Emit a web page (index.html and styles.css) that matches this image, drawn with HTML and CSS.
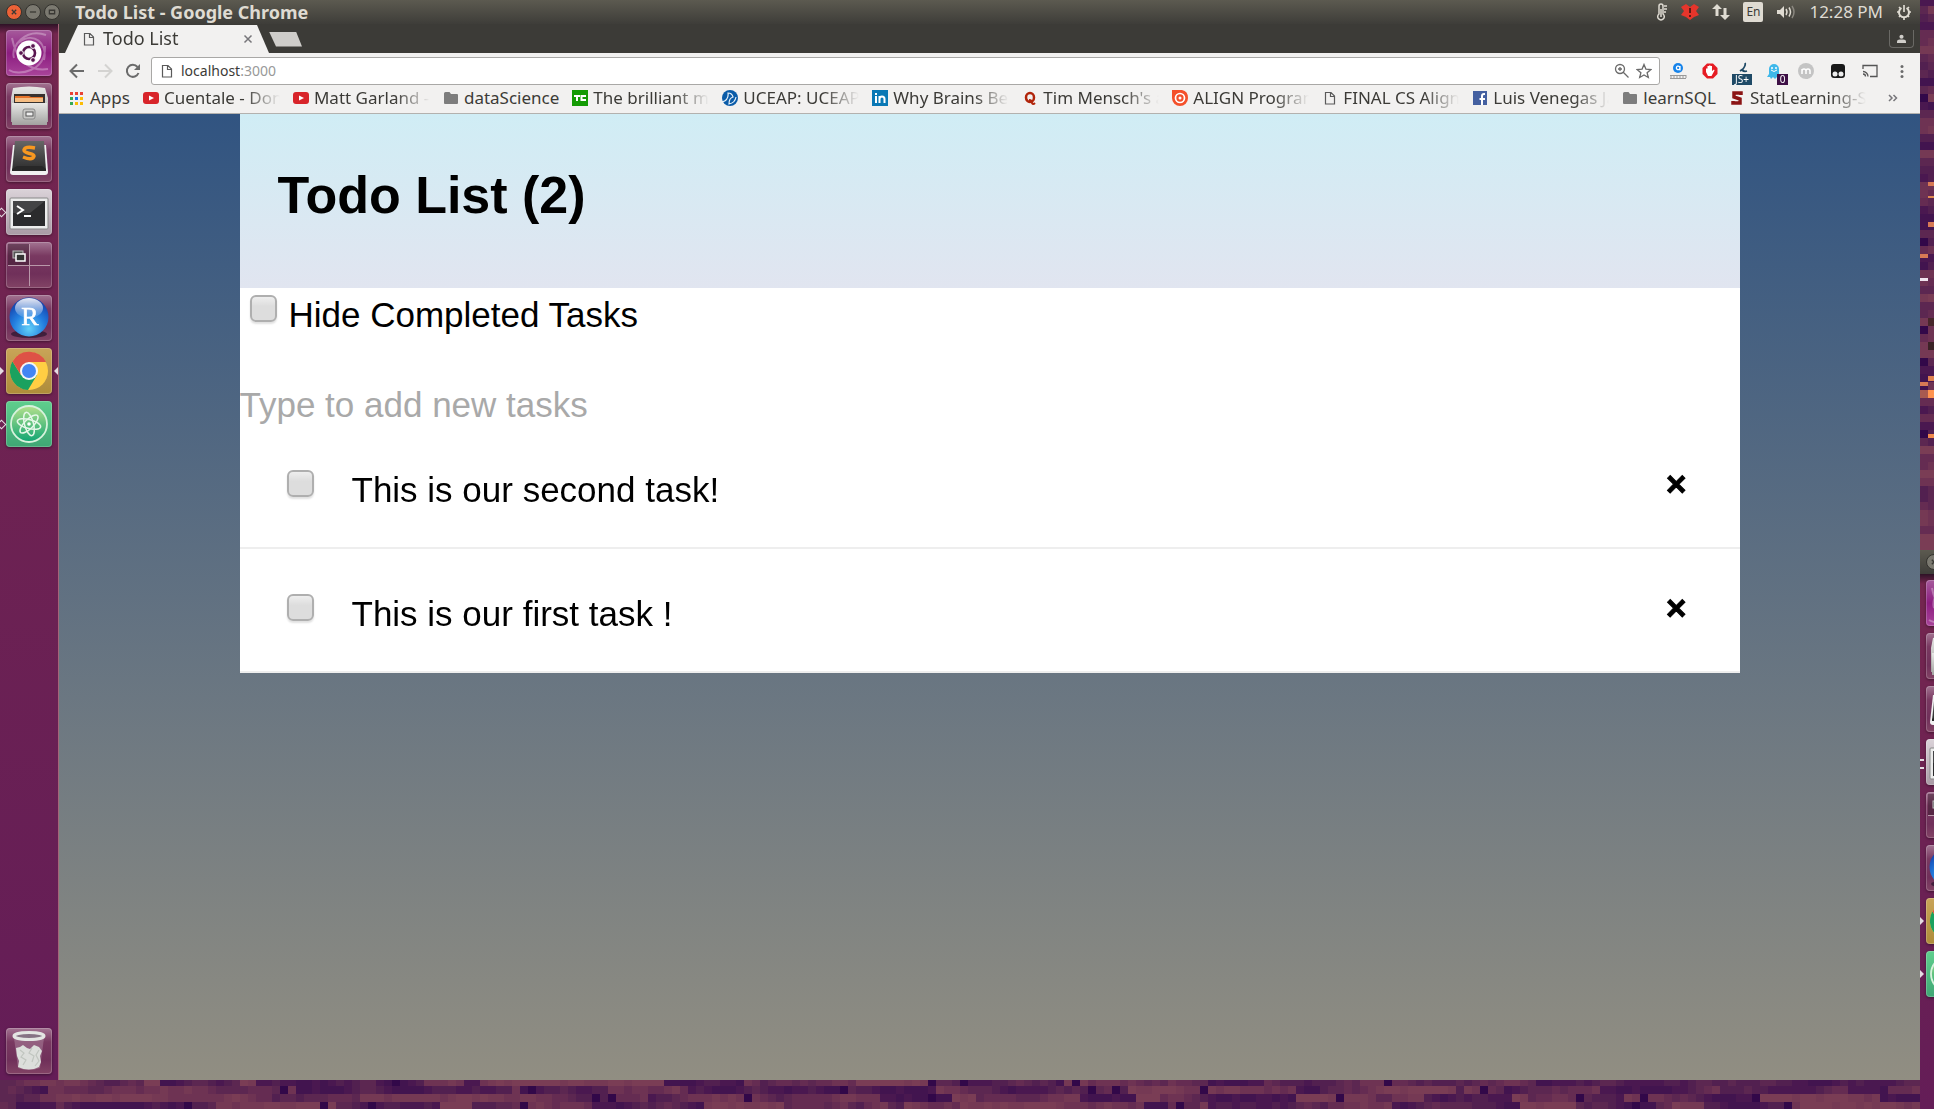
FILE: index.html
```html
<!DOCTYPE html>
<html lang="en">
<head>
<meta charset="utf-8">
<title>Todo List</title>
<link rel="stylesheet" href="styles.css">
</head>
<body>
<svg class="defs" aria-hidden="true">
  <defs>
    <linearGradient id="g-metal" x1="0" y1="0" x2="0" y2="1"><stop offset="0" stop-color="#e8e8e6"/><stop offset="1" stop-color="#a2a2a0"/></linearGradient>
    <linearGradient id="g-dark" x1="0" y1="0" x2="0" y2="1"><stop offset="0" stop-color="#666"/><stop offset="1" stop-color="#2b2b2b"/></linearGradient>
    <radialGradient id="g-blue" cx=".5" cy=".8" r=".8"><stop offset="0" stop-color="#62d0f8"/><stop offset=".5" stop-color="#237fe0"/><stop offset="1" stop-color="#1238a4"/></radialGradient>
    <linearGradient id="g-shine" x1="0" y1="0" x2="0" y2="1"><stop offset="0" stop-color="#fff" stop-opacity=".9"/><stop offset="1" stop-color="#fff" stop-opacity=".1"/></linearGradient>
    <linearGradient id="g-atom" x1="0" y1="0" x2="0" y2="1"><stop offset="0" stop-color="#b4e08c"/><stop offset="1" stop-color="#0fa573"/></linearGradient>
    <symbol id="i-ubuntu" viewBox="0 0 46 46">
      <g fill="none" stroke="#fff" stroke-opacity=".3" stroke-width="2"><path d="M3 40C12 46 40 42 39 16M40 5C20-2 4 16 8 28M6 8C10 30 24 42 42 39M12 13C28 0 42 14 38 30"/></g>
      <circle cx="23" cy="23" r="12.5" fill="#fff"/>
      <circle cx="23" cy="23" r="6" fill="none" stroke="#5a1650" stroke-width="2.6"/>
      <g fill="#5a1650" stroke="#fff"><circle cx="15" cy="23" r="2.4"/><circle cx="27" cy="16" r="2.4"/><circle cx="27" cy="30" r="2.4"/></g>
    </symbol>
    <symbol id="i-files" viewBox="0 0 46 46">
      <path d="M7 5q16-3 32 0l3 10v24H5V15z" fill="url(#g-metal)"/><path d="M8 11h31v9H8z" fill="#38322f"/>
      <path d="M9 13h14l2 1h12v4H9z" fill="#e6742a"/><path d="M9 15h28v4H9z" fill="#f5bd83"/>
      <path d="M6 20h35v22H6z" fill="url(#g-metal)"/><rect x="17" y="26" width="12" height="10" rx="2" fill="#c8c8c6" stroke="#888"/><rect x="20" y="29" width="7" height="4" fill="#eee" stroke="#555"/>
    </symbol>
    <symbol id="i-sublime" viewBox="0 0 46 46">
      <path d="M7 9L4 36q0 3 3 3h32q3 0 3-3L40 9z" fill="#f1f1f1"/><path d="M9 5h29l2 30H6z" fill="url(#g-dark)"/><path d="M6 35h34v-2l-4-3H11l-5 3z" fill="#272727"/>
      <path d="M29 12q-10-2-11 2c0 4 10 3 10 6-1 4-6 3-11 1" fill="none" stroke="#f89820" stroke-width="3.5"/>
    </symbol>
    <symbol id="i-terminal" viewBox="0 0 46 46">
      <rect x="4" y="9" width="38" height="31" rx="1" fill="#ececec" stroke="#888"/><rect x="7" y="12" width="32" height="25" fill="#2b2b2d"/><path d="M7 12h32L24 24H7z" fill="#fff" opacity=".12"/>
      <path d="M11 17l6 4-6 4M18 27h7" fill="none" stroke="#fff" stroke-width="2"/>
    </symbol>
    <symbol id="i-spaces" viewBox="0 0 46 46">
      <path d="M2 2h21v21H2z" fill="#301525" opacity=".45"/><path d="M23.500 2v42M2 23.500h42" stroke="#b998aa" fill="none"/>
      <rect x="7" y="9" width="10" height="7" fill="#555" stroke="#bbb"/><rect x="10" y="12" width="9" height="7" fill="#333" stroke="#fff" stroke-width="1.500"/>
    </symbol>
    <symbol id="i-r" viewBox="0 0 46 46">
      <ellipse cx="23" cy="39" rx="18" ry="4" fill="#1d0e25" opacity=".6"/><circle cx="23" cy="22" r="19.500" fill="url(#g-blue)"/><ellipse cx="23" cy="13" rx="14" ry="10" fill="url(#g-shine)"/>
      <text x="24" y="30" text-anchor="middle" font-family="Liberation Serif, serif" font-size="26" fill="#fff" stroke="#fff" stroke-width=".6">R</text>
    </symbol>
    <symbol id="i-chrome" viewBox="0 0 46 46">
      <circle cx="23" cy="23" r="19" fill="#ffce43"/><path d="M6.500 13.500A19 19 0 0 0 22 42l9-15-16 0z" fill="#1aa15f"/><path d="M6.500 13.500A19 19 0 0 1 40 14H23l-8 13z" fill="#de5246"/>
      <circle cx="23" cy="23" r="9" fill="#f5f5f5"/><circle cx="23" cy="23" r="7" fill="#4285f4"/>
    </symbol>
    <symbol id="i-atom" viewBox="0 0 46 46">
      <circle cx="23" cy="23" r="18" fill="url(#g-atom)" stroke="#d7f2dc" stroke-width="1.800"/>
      <g fill="none" stroke="#e5f7e9" stroke-width="1.500"><ellipse cx="23" cy="23" rx="12" ry="4.500" transform="rotate(15 23 23)"/><ellipse cx="23" cy="23" rx="12" ry="4.500" transform="rotate(75 23 23)"/><ellipse cx="23" cy="23" rx="12" ry="4.500" transform="rotate(135 23 23)"/></g><circle cx="23" cy="23" r="1.800" fill="#fff"/>
    </symbol>
    <symbol id="i-trash" viewBox="0 0 46 46">
      <path d="M8 10l4 30q11 4 22 0l4-30z" fill="#fff" opacity=".2"/>
      <path d="M10 20l4-1 3-2 4 3 3 1 4-4 5 2 3 4-2 5 1 6-2 5q-10 5-21 0l1-6-2-5z" fill="#dcdedb"/><path d="M14 22l4 3-3 4 5 3-3 5M26 20l-3 5 5 3-2 6M33 22l-3 5 3 6-4 5" fill="none" stroke="#c0c5bf" stroke-width="1.200"/>
      <ellipse cx="23" cy="8" rx="15" ry="3.500" fill="#867384" stroke="#e4e6e3" stroke-width="3"/>
    </symbol>
    <symbol id="i-page" viewBox="0 0 16 16"><path d="M3.500 2.500h5.500l3.500 3.500v8h-9zM8.500 2.500v4h4" fill="none" stroke="#5a5a5a" stroke-width="1.200"/></symbol>
    <symbol id="i-folder" viewBox="0 0 16 16"><path d="M1 3.500q0-1.500 1.500-1.500h4l1.500 2h6q1 0 1 1v8q0 1-1 1H2q-1 0-1-1z" fill="#7d7d7d"/></symbol>
    <symbol id="i-youtube" viewBox="0 0 16 16"><rect y="2" width="16" height="12" rx="3" fill="#d8242a"/><path d="M6 5.500v5L11 8z" fill="#fff"/></symbol>
  </defs>
</svg>

<canvas class="wallpaper" id="wallpaper" aria-hidden="true"></canvas>

<div class="screens">
  <div class="desktop">
    <header class="titlebar">
      <div class="window-buttons">
        <button class="wb wb-close" aria-label="Close"><svg viewBox="0 0 16 16"><path d="M5.500 5.500l5 5M10.500 5.500l-5 5"/></svg></button>
        <button class="wb" aria-label="Minimize"><svg viewBox="0 0 16 16"><path d="M4.500 8h7"/></svg></button>
        <button class="wb" aria-label="Maximize"><svg viewBox="0 0 16 16"><path d="M5 6h6v4H5z"/></svg></button>
      </div>
      <span class="window-title">Todo List - Google Chrome</span>
      <div class="tray">
        <svg width="12" height="18" viewBox="0 0 12 18"><path d="M3 11V3a2 2 0 0 1 4 0v8a3.300 3.300 0 1 1-4 0z" fill="none" stroke="#dfdbd2" stroke-width="1.500"/><path d="M5 6v8M8 3h3M8 6h3M8 9h2" stroke="#dfdbd2" stroke-width="1.500"/></svg>
        <svg width="18" height="18" viewBox="0 0 18 18"><path d="M5 1l4 3 4-3 5 3-3 4 3 4-5 2-4 3-4-3-5-2 3-4-3-4z" fill="#e6352b"/><path d="M9 5v5M9 12v2" stroke="#5e1a16" stroke-width="2"/></svg>
        <svg width="18" height="16" viewBox="0 0 18 16"><path d="M5 0l5 5H6.500v7h-3V5H0zM13 16l-5-5h3.500V4h3v7H18z" fill="#dfdbd2"/></svg>
        <span class="lang">En</span>
        <svg width="20" height="16" viewBox="0 0 20 16"><path d="M1 6h3l4-4v12l-4-4H1z" fill="#dfdbd2"/><path d="M10 5q2 3 0 6M13 3.500q3 4.500 0 9" fill="none" stroke="#dfdbd2" stroke-width="1.500"/><path d="M16 2q4 6 0 12" fill="none" stroke="#8a877f" stroke-width="1.500"/></svg>
        <span class="clock">12:28 PM</span>
        <svg width="16" height="16" viewBox="0 0 16 16"><path d="M5.500 4a5 5 0 1 0 5 0" fill="none" stroke="#dfdbd2" stroke-width="2"/><path d="M8 1v7M1 8h2M13 8h2M3 13l1.500-1.500M13 13l-1.500-1.500M8 13v3M3 3l1.500 1.500M13 3l-1.500 1.500" stroke="#dfdbd2" stroke-width="1.700"/></svg>
      </div>
    </header>

    <div class="workspace">
      <nav class="launcher" aria-label="Launcher">
        <button class="tile tile-ubuntu" aria-label="Dash"><svg><use href="#i-ubuntu"/></svg></button>
        <button class="tile" aria-label="Files"><svg><use href="#i-files"/></svg></button>
        <button class="tile" aria-label="Sublime Text"><svg><use href="#i-sublime"/></svg></button>
        <button class="tile tile-light running-off" aria-label="Terminal"><svg><use href="#i-terminal"/></svg></button>
        <button class="tile" aria-label="Workspaces"><svg><use href="#i-spaces"/></svg></button>
        <button class="tile" aria-label="RStudio"><svg><use href="#i-r"/></svg></button>
        <button class="tile tile-gold running focused" aria-label="Chrome"><svg><use href="#i-chrome"/></svg></button>
        <button class="tile tile-green running-off" aria-label="Atom"><svg><use href="#i-atom"/></svg></button>
        <button class="tile tile-trash" aria-label="Trash"><svg><use href="#i-trash"/></svg></button>
      </nav>

      <div class="browser">
        <div class="tabstrip">
          <div class="tab">
            <svg class="ico"><use href="#i-page"/></svg>
            <span class="tab-title">Todo List</span>
            <button class="tab-close" aria-label="Close tab"><svg viewBox="0 0 10 10"><path d="M1.500 1.500l7 7M8.500 1.500l-7 7"/></svg></button>
          </div>
          <button class="newtab" aria-label="New tab"></button>
          <button class="profile" aria-label="Profile"><svg viewBox="0 0 10 10"><circle cx="5" cy="3" r="2.300"/><path d="M0 10V8q0-2 3-2h4q3 0 3 2v2z"/></svg></button>
        </div>

        <div class="toolbar">
          <button class="nav" aria-label="Back"><svg viewBox="0 0 16 16"><path d="M15 8H2M8 1.500L1.500 8 8 14.500" stroke="#6b6b6b"/></svg></button>
          <button class="nav" aria-label="Forward"><svg viewBox="0 0 16 16"><path d="M1 8h13M8 1.500L14.500 8 8 14.500" stroke="#d4d3d1"/></svg></button>
          <button class="nav" aria-label="Reload"><svg viewBox="0 0 16 16"><path d="M13.500 10A6 6 0 1 1 12.500 4" stroke="#6b6b6b"/><path d="M15 1v6H9z" fill="#6b6b6b"/></svg></button>
          <div class="omnibox">
            <svg class="ico"><use href="#i-page"/></svg>
            <span class="url">localhost<span class="port">:3000</span></span>
            <svg class="ico" viewBox="0 0 16 16"><path d="M10.500 6a4.500 4.500 0 1 1-9 0 4.500 4.500 0 0 1 9 0zM9.500 9.500l5 5M4 6h4M6 4v4" fill="none" stroke="#6b6b6b" stroke-width="1.300"/></svg>
            <svg class="ico" viewBox="0 0 16 16"><path d="M8 1.500l1.900 4.600 5 .4-3.800 3.200 1.200 4.800L8 11.900l-4.300 2.600 1.200-4.800L1.100 6.500l5-.4z" fill="none" stroke="#6b6b6b" stroke-width="1.300"/></svg>
          </div>
          <button class="ext" aria-label="Ruler"><svg viewBox="0 0 20 20"><circle cx="10" cy="7" r="5" fill="#1683ea"/><path d="M12 5v4.500M12 7a1.800 1.800 0 1 0-.1.500" fill="none" stroke="#fff" stroke-width="1.300"/><path d="M2 17.500h16M2 14.500h16M3 14v3M6 14v3M9 14v3M12 14v3M15 14v3M18 14v3" stroke="#999"/></svg></button>
          <button class="ext" aria-label="Ad blocker"><svg viewBox="0 0 20 20"><path d="M7 2.500h6L17.500 7v6L13 17.500H7L2.500 13V7z" fill="#e61c24"/><path d="M6 11V7.500h1.500V5h1.500v-.5h1.500V5h1.500v5l2-1.500.5 1-3 5.500H8z" fill="#fff"/></svg></button>
          <button class="ext" aria-label="JavaScript toggle"><svg viewBox="0 0 20 20"><path d="M13 2q1 2-2 6l-3 2M10 9q2 2 5 1" fill="none" stroke="#1f4a66" stroke-width="1.800"/></svg><span class="badge badge-js">JS+</span></button>
          <button class="ext" aria-label="Tracker blocker"><svg viewBox="0 0 20 20"><path d="M5 8a5 5 0 0 1 10 0v5l2 3-4 0-2 2-2-2-2 2-1-2H3l2-3z" fill="#3fb8ea"/><circle cx="8" cy="7" r="1" fill="#fff"/><circle cx="12" cy="7" r="1" fill="#fff"/><path d="M7 9q3 3 6 0" fill="none" stroke="#fff"/></svg><span class="badge badge-count">0</span></button>
          <button class="ext" aria-label="Mentions"><svg viewBox="0 0 20 20"><circle cx="10" cy="10" r="8" fill="#c4c4c4"/><path d="M6 13V8M6 10q0-2 2-2t2 2v3M10 10q0-2 2-2t2 2v3" fill="none" stroke="#fff" stroke-width="1.500"/></svg></button>
          <button class="ext" aria-label="User scripts"><svg viewBox="0 0 20 20"><rect x="3" y="3" width="14" height="14" rx="3" fill="#191919"/><circle cx="7" cy="13" r="2.500" fill="#eee"/><circle cx="13" cy="13" r="2.500" fill="#eee"/></svg></button>
          <button class="ext" aria-label="Cast"><svg viewBox="0 0 20 20"><path d="M3 8V4.500h14v11h-7M3 10.500a5 5 0 0 1 5 5M3 13a2.500 2.500 0 0 1 2.500 2.500" fill="none" stroke="#555" stroke-width="1.300"/></svg></button>
          <button class="ext" aria-label="Menu"><svg viewBox="0 0 20 20" fill="#6b6b6b"><circle cx="10" cy="5.500" r="1.500"/><circle cx="10" cy="10.500" r="1.500"/><circle cx="10" cy="15.500" r="1.500"/></svg></button>
        </div>

        <nav class="bookmarks" aria-label="Bookmarks">
          <a href="#"><svg class="ico" viewBox="0 0 16 16"><path d="M1 2h3v3H1z" fill="#e94235"/><path d="M6 2h3v3H6z" fill="#e94235"/><path d="M11 2h3v3h-3z" fill="#e94235"/><path d="M1 7h3v3H1z" fill="#34a853"/><path d="M6 7h3v3H6z" fill="#1a73e8"/><path d="M11 7h3v3h-3z" fill="#fbbc05"/><path d="M1 12h3v3H1z" fill="#34a853"/><path d="M6 12h3v3H6z" fill="#fbbc05"/><path d="M11 12h3v3h-3z" fill="#fbbc05"/></svg><span>Apps</span></a>
          <a href="#"><svg class="ico"><use href="#i-youtube"/></svg><span class="long">Cuentale - Don Carlos</span></a>
          <a href="#"><svg class="ico"><use href="#i-youtube"/></svg><span class="long">Matt Garland - You</span></a>
          <a href="#"><svg class="ico"><use href="#i-folder"/></svg><span>dataScience</span></a>
          <a href="#"><svg class="ico" viewBox="0 0 16 16"><path d="M0 0h16v16H0z" fill="#149b04"/><path d="M2 6h6M5 6v5M14 6H9.500v4H14" fill="none" stroke="#fff" stroke-width="2"/></svg><span class="long">The brilliant mechanics</span></a>
          <a href="#"><svg class="ico" viewBox="0 0 16 16"><circle cx="8" cy="8" r="8" fill="#0b5ca8"/><path d="M0 12Q7 10 6 3q4 0 5 4-4 1-4 7 6-1 7-7" fill="none" stroke="#e8f2fa" stroke-width="1.200"/></svg><span class="long">UCEAP: UCEAP Home</span></a>
          <a href="#"><svg class="ico" viewBox="0 0 16 16"><path d="M0 0h16v16H0z" fill="#0a78b5"/><path d="M4 6v7M4 3v2M7.500 6v7M7.500 9q0-2.500 2.500-2.500T12.500 9v4" fill="none" stroke="#fff" stroke-width="2"/></svg><span class="long">Why Brains Benefit</span></a>
          <a href="#"><svg class="ico" viewBox="0 0 16 16"><ellipse cx="8" cy="7.500" rx="4" ry="4.500" fill="none" stroke="#b1250b" stroke-width="2.500"/><path d="M7 10q3 0 3 3 1 2 3 0" fill="none" stroke="#b1250b" stroke-width="2"/></svg><span class="long">Tim Mensch's answer</span></a>
          <a href="#"><svg class="ico" viewBox="0 0 16 16"><path d="M0 0h10q6 1 6 8a8 8 0 0 1-16 0z" fill="#f4502a"/><circle cx="8" cy="8" r="4.500" fill="none" stroke="#fff" stroke-width="1.700"/><circle cx="8" cy="8" r="1.500" fill="#fff"/></svg><span class="long">ALIGN Program Info</span></a>
          <a href="#"><svg class="ico"><use href="#i-page"/></svg><span class="long">FINAL CS Align Plan</span></a>
          <a href="#"><svg class="ico" viewBox="0 0 16 16"><path d="M1 1h14v14H1z" fill="#4460a0"/><path d="M13 4h-1q-2 0-2 2v9M7.500 9H13" fill="none" stroke="#fff" stroke-width="2"/></svg><span class="long">Luis Venegas Jara</span></a>
          <a href="#"><svg class="ico"><use href="#i-folder"/></svg><span>learnSQL</span></a>
          <a href="#"><svg class="ico" viewBox="0 0 16 16"><path d="M12 5V3H5v4l6 2v4H4v-2" fill="none" stroke="#8c1515" stroke-width="3.500"/></svg><span class="long">StatLearning-Stanford</span></a>
          <button class="more" aria-label="More bookmarks"><svg viewBox="0 0 10 10"><path d="M1 2l3 3-3 3M5.500 2l3 3-3 3"/></svg></button>
        </nav>

        <main class="page">
          <div class="container">
            <header class="app-header"><h1>Todo List (2)</h1></header>
            <label class="hide-completed"><input type="checkbox" class="check"><span>Hide Completed Tasks</span></label>
            <form class="new-task"><input type="text" placeholder="Type to add new tasks" aria-label="Type to add new tasks"></form>
            <ul class="tasks">
              <li><label><input type="checkbox" class="check"><span>This is our second task!</span></label><button class="delete" aria-label="Delete task">×</button></li>
              <li><label><input type="checkbox" class="check"><span>This is our first task !</span></label><button class="delete" aria-label="Delete task">×</button></li>
            </ul>
          </div>
        </main>
      </div>
    </div>
  </div>

  <div class="second-desktop">
    <div class="titlebar"><div class="window-buttons"><button class="wb" aria-label="Close"><svg viewBox="0 0 16 16"><path d="M5.500 5.500l5 5M10.500 5.500l-5 5"/></svg></button></div></div>
    <nav class="launcher" aria-label="Second launcher">
      <button class="tile tile-ubuntu" aria-label="Dash"><svg><use href="#i-ubuntu"/></svg></button>
      <button class="tile" aria-label="Files"><svg><use href="#i-files"/></svg></button>
      <button class="tile" aria-label="Sublime Text"><svg><use href="#i-sublime"/></svg></button>
      <button class="tile tile-light running-two" aria-label="Terminal"><svg><use href="#i-terminal"/></svg></button>
      <button class="tile" aria-label="Workspaces"><svg><use href="#i-spaces"/></svg></button>
      <button class="tile" aria-label="RStudio"><svg><use href="#i-r"/></svg></button>
      <button class="tile tile-gold running" aria-label="Chrome"><svg><use href="#i-chrome"/></svg></button>
      <button class="tile tile-green running" aria-label="Atom"><svg><use href="#i-atom"/></svg></button>
    </nav>
  </div>
</div>
<script src="wallpaper.js"></script>
</body>
</html>
```
FILE: styles.css
```css
* { box-sizing: border-box; }
body { margin: 0; background: #57234f; font-family: "Liberation Sans", Arial, sans-serif; overflow: hidden; }
button { margin: 0; padding: 0; border: 0; background: none; font: inherit; color: inherit; display: block; flex: none; }
svg { display: block; flex: none; }
.defs { position: absolute; width: 0; height: 0; }
.wallpaper { position: fixed; top: 0; left: 0; z-index: -1; }

/* Two monitors side by side, wallpaper showing below the first */
.screens { display: grid; grid-template-columns: 1fr 14px; height: 100vh; }
.desktop { display: flex; flex-direction: column; min-width: 0; margin-bottom: 29px; }
.second-desktop { overflow: hidden; padding-top: 550px; display: flex; flex-direction: column; }

.titlebar { height: 24px; flex: none; display: flex; align-items: center; padding: 0 8px 0 6px; background: linear-gradient(#5c5a50, #3e3d39); color: #dfdbd2; font-family: "Noto Sans", sans-serif; }
.window-buttons { display: flex; gap: 3px; }
.wb { width: 16px; height: 16px; border-radius: 50%; background: #7b7970; border: 1px solid #33322e; }
.wb svg { width: 14px; height: 14px; fill: none; stroke: #3a3935; stroke-width: 1.500; }
.wb-close { background: #ec6237; }
.window-title { margin-left: 15px; font-weight: bold; font-size: 18px; line-height: 24px; }
.tray { margin-left: auto; display: flex; align-items: center; gap: 13px; font-size: 17px; line-height: 24px; }
.lang { width: 20px; height: 20px; line-height: 20px; border-radius: 2px; background: #dfdbd2; color: #3c3b37; font-size: 12px; text-align: center; }

.workspace { flex: 1; display: flex; min-height: 0; }
.launcher { width: 59px; flex: none; display: flex; flex-direction: column; gap: 7px; padding: 6px; background: linear-gradient(#2e1226, #74264f 10px, #641d57); border-right: 1px solid #a46578; }
.second-desktop .launcher { flex: 1; }
.tile { position: relative; width: 46px; height: 46px; border-radius: 4px; background: linear-gradient(#a37492, #793961 30%, #70305a 70%, #824365); box-shadow: inset 0 0 0 1px #ffffff33, 0 1px 3px #0006; }
.tile svg { width: 46px; height: 46px; }
.tile-ubuntu { background: linear-gradient(#a65b9c, #8c1d80 50%, #a9449a); }
.tile-light { background: linear-gradient(#dbd3d9, #a99aa5); }
.tile-gold { background: linear-gradient(#c9a458, #ae8c3a); }
.tile-green { background: linear-gradient(#5fce8d, #3fa774); }
.tile-trash { margin-top: auto; }
.running::before, .running-off::before, .running-two::before, .focused::after { content: ""; position: absolute; top: 19px; left: -6px; border: 4px solid transparent; border-left-color: #e4dce2; border-right-width: 0; }
.running-off::before { top: 20px; left: -8px; width: 5px; height: 5px; border: 1px solid #e4dce2; transform: rotate(45deg); }
.running-two::before { top: 20px; width: 4px; height: 6px; border: solid #e4dce2; border-width: 2px 0; }
.focused::after { left: auto; right: -6px; border-color: transparent #e4dce2 transparent transparent; border-width: 4px 4px 4px 0; }

.browser { flex: 1; min-width: 0; display: flex; flex-direction: column; font-family: "Noto Sans", sans-serif; color: #3c3b37; }
.tabstrip { height: 29px; flex: none; display: flex; align-items: center; padding: 1px 6px 0; background: #3c3b37; }
.tab { width: 204px; height: 28px; display: flex; align-items: center; padding: 0 16px; background: #f2f1f0; clip-path: polygon(0 100%, 13px 0, 192px 0, 100% 100%); font-size: 18px; line-height: 24px; }
.tab-title { flex: 1; margin-left: 6px; padding-bottom: 2px; }
.tab-close { width: 10px; height: 10px; }
.tab-close svg, .more svg { width: 10px; height: 10px; fill: none; stroke: #77767a; stroke-width: 1.500; }
.newtab { width: 33px; height: 15px; background: #cfcdca; clip-path: polygon(0 0, 27px 0, 100% 100%, 7px 100%); }
.profile { margin-left: auto; width: 25px; height: 18px; border: 1px solid #6a6965; border-top: 0; border-radius: 0 0 4px 4px; display: grid; place-items: center; }
.profile svg { width: 9px; height: 9px; fill: #d0ceca; }
.ico { width: 16px; height: 16px; }

.toolbar { height: 35px; flex: none; display: flex; align-items: center; padding: 0 8px 0 10px; background: #f2f1f0; gap: 12px; }
.nav svg { width: 16px; height: 16px; fill: none; stroke-width: 2; }
.omnibox { flex: 1; height: 28px; display: flex; align-items: center; gap: 6px; padding: 0 7px; margin: 0 -4px 0 -2px; background: #fff; border: 1px solid #a9a8a6; border-radius: 3px; font-size: 14px; line-height: 20px; }
.url { flex: 1; }
.port { color: #999; }
.ext { position: relative; width: 20px; height: 20px; }
.ext svg { width: 20px; height: 20px; }
.badge { position: absolute; top: 13px; height: 11px; line-height: 11px; color: #fff; font-size: 10px; text-align: center; }
.badge-js { left: 0; width: 20px; background: #1f4a66; }
.badge-count { left: 13px; width: 11px; background: #3e1046; }

.bookmarks { height: 26px; flex: none; display: flex; align-items: center; gap: 13px; padding: 0 10px 5px; background: #f2f1f0; border-bottom: 1px solid #b3b1ae; font-size: 17px; line-height: 20px; }
.bookmarks a { display: flex; align-items: center; gap: 5px; flex: none; color: inherit; text-decoration: none; white-space: nowrap; }
.long { width: 116px; overflow: hidden; mask-image: linear-gradient(to right, #000 70%, transparent); }
.more { margin: 0 12px 0 auto; }

.page { flex: 1; min-height: 0; background: linear-gradient(#315481, #918e82); color: #000; font-family: "Liberation Sans", Arial, sans-serif; font-size: 35px; line-height: 40px; }
.container { max-width: 1500px; margin: 0 auto; background: #fff; }
.app-header { padding: 51px 38px 63px; background: linear-gradient(#d0edf5, #e1e5f0); }
h1 { margin: 0; font-size: 52px; line-height: 60px; }
.check { appearance: none; width: 27px; height: 27px; margin: 0; flex: none; border: 2px solid #afafaf; border-radius: 6px; background: linear-gradient(#eee, #ddd 40%); box-shadow: 0 2px 2px #0000001f; }
.hide-completed { display: flex; gap: 12px; padding: 7px 10px 0; }
.new-task { margin-top: 50px; }
.new-task input { display: block; width: 100%; height: 40px; padding: 0; border: 0; outline: 0; background: none; font: inherit; }
.new-task input::placeholder { color: #a9a9a9; opacity: 1; }
.tasks { margin: 0; padding: 0; list-style: none; }
.tasks li { display: flex; align-items: flex-start; padding: 45px 53px 37px 47px; border-bottom: 2px solid #eee; }
.tasks label { flex: 1; display: flex; gap: 38px; }
.delete { font-weight: bold; line-height: 28px; -webkit-text-stroke: 1px #000; }
```
FILE: wallpaper.js
```js
// Mosaic wallpaper: 8px cells in purple and rose, with a few bright ones.
const canvas = document.getElementById("wallpaper");
canvas.width = window.innerWidth;
canvas.height = window.innerHeight;
const ctx = canvas.getContext("2d");
const palette = ["#42144f", "#4a1850", "#522050", "#5c2751", "#652c52", "#6e3353", "#753954", "#7a3d55"];
let seed = 11;
function random() {
  seed = (seed * 16807) % 2147483647;
  return seed / 2147483647;
}
for (let y = -2; y < canvas.height; y += 8) {
  let tone = 3;
  for (let x = 0; x < canvas.width; x += 8) {
    const step = random();
    if (step < 0.12) tone = Math.floor(random() * palette.length);
    else if (step < 0.4) tone = Math.max(0, tone - 1);
    else if (step < 0.68) tone = Math.min(palette.length - 1, tone + 1);
    ctx.fillStyle = random() < 0.03 ? "#320849" : palette[tone];
    ctx.fillRect(x, y, 8, 8);
  }
}
const right = canvas.width - 14;
const accents = [
  [8, 182, 4, "#d77a55"], [8, 196, 2, "#e08a50"], [8, 222, 5, "#d77a55"],
  [0, 254, 4, "#d77a55"], [0, 278, 3, "#f0e4ee"], [8, 318, 8, "#47272b"],
  [8, 342, 8, "#3b2326"], [8, 376, 5, "#e0824f"], [0, 382, 4, "#d77a55"],
  [0, 390, 8, "#a85a50"], [8, 390, 8, "#ff934f"], [8, 434, 4, "#f08a4c"]
];
for (const [x, y, h, color] of accents) {
  ctx.fillStyle = color;
  ctx.fillRect(right + x, y, 8, h);
}
```
